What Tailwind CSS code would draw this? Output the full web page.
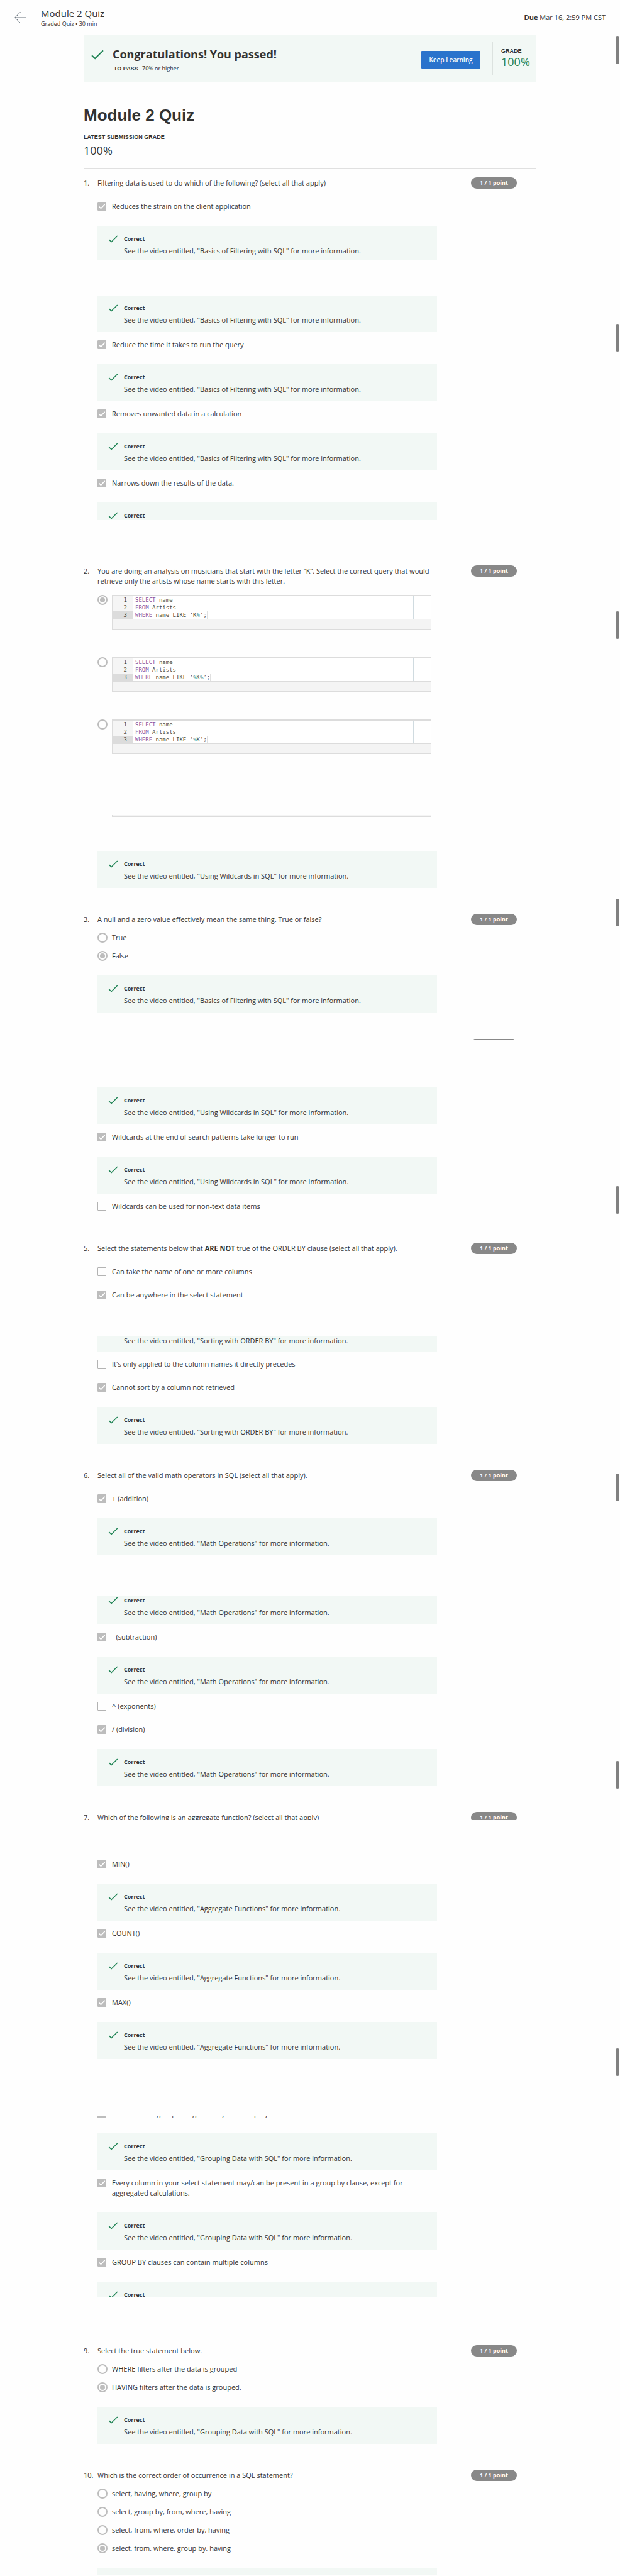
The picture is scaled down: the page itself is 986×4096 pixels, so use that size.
<!DOCTYPE html>
<html lang="en">
<head>
<meta charset="utf-8">
<title>Module 2 Quiz</title>
<meta name="viewport" content="width=device-width, initial-scale=1">
<script src="https://cdn.jsdelivr.net/npm/@tailwindcss/browser@4"></script>
</head>
<body class="relative overflow-x-hidden bg-[#fefefe] font-['Open_Sans',sans-serif] text-[11px] leading-4 text-[#333]">

<svg class="hidden" aria-hidden="true">
  <symbol id="tick" viewBox="0 0 20 16"><path d="M1 9.2 6.2 14 19 1.4" fill="none" stroke="currentColor" stroke-width="2"/></symbol>
</svg>

<header class="flex h-14 items-center border-b border-[#bdbdbd] px-[23px]">
  <a href="#" aria-label="Back" class="mr-6 block text-[#3c4a57]">
    <svg class="size-[18px]" viewBox="0 0 18 18" fill="none" stroke="currentColor"><path d="M9.3.3.8 9l8.5 8.7" stroke-width="1"/><path d="M.8 9H18" stroke="#7d868e" stroke-width="1.2"/></svg>
  </a>
  <div class="flex-1">
    <p class="text-[15px] leading-5">Module 2 Quiz</p>
    <p class="mt-px text-[9px] leading-3">Graded Quiz • 30 min</p>
  </div>
  <p><b class="font-bold">Due</b> Mar 16, 2:59 PM CST</p>
</header>

<main class="mx-auto max-w-[720px]">
  <section class="flex h-[74px] items-start bg-[#f2f8f5] pl-3">
    <svg class="mt-[23px] h-4 w-5 text-[#1f8354]"><use href="#tick"/></svg>
    <div class="ml-[14px] flex-1 pt-[17px]">
      <h2 class="text-[18px] leading-[26px] font-bold">Congratulations! You passed!</h2>
      <p class="mt-[3px] pl-[2px] text-[9px] leading-[14px]"><b class="mr-1 font-['Liberation_Sans',sans-serif]">TO PASS</b> 70% or higher</p>
    </div>
    <button type="button" class="mt-[25px] mr-[19px] h-7 w-[94px] rounded-[1px] bg-[#2a73cc] text-[10px] font-semibold text-white">Keep Learning</button>
    <div class="mt-[11px] h-[52px] w-[70px] border-l border-[#dce2df] pt-2 pl-[13px]">
      <p class="font-['Liberation_Sans',sans-serif] text-[9px] leading-3 font-bold">GRADE</p>
      <p class="mt-px text-[18px] leading-5 text-[#1f8354]">100%</p>
    </div>
  </section>

  <h1 class="mt-[37px] font-['Liberation_Sans',sans-serif] text-[26px] leading-8 font-bold">Module 2 Quiz</h1>
  <p class="mt-3 font-['Liberation_Sans',sans-serif] text-[9px] leading-[14px] font-bold">LATEST SUBMISSION GRADE</p>
  <p class="mt-[2px] text-[18px] leading-6">100%</p>
  <hr class="mt-4 border-t border-[#e0e0e0]">

  <div id="quiz"></div>
</main>

<!-- scroll thumbs along the right edge -->
<div class="absolute inset-y-0 right-px flex w-[6px] flex-col overflow-hidden pt-[58px]" aria-hidden="true">
  <i class="h-11 shrink-0 rounded-full bg-[#808080]"></i>
  <i class="mt-[413px] h-11 shrink-0 rounded-full bg-[#808080]"></i>
  <i class="mt-[413px] h-11 shrink-0 rounded-full bg-[#808080]"></i>
  <i class="mt-[413px] h-11 shrink-0 rounded-full bg-[#808080]"></i>
  <i class="mt-[413px] h-11 shrink-0 rounded-full bg-[#808080]"></i>
  <i class="mt-[413px] h-11 shrink-0 rounded-full bg-[#808080]"></i>
  <i class="mt-[413px] h-11 shrink-0 rounded-full bg-[#808080]"></i>
  <i class="mt-[413px] h-11 shrink-0 rounded-full bg-[#808080]"></i>
  <i class="mt-[793px] h-[2px] shrink-0 rounded-t-full bg-[#808080]"></i>
</div>

<script>
  let id = 0;
  let group = 0;

  const pill = '<span class="ml-[54px] block h-[18px] w-[73px] shrink-0 rounded-[9px] bg-[#888] text-center text-[9px] leading-[18px] font-bold text-white">1 / 1 point</span>';

  // question line: number, text, points
  const ask = (gap, n, text, clip = '') => {
    group = n;
    return `<div class="${gap} ${clip} flex items-start"><span class="w-[22px] shrink-0 pt-px">${n}.</span><h3 class="w-[540px] pt-px">${text}</h3>${pill}</div>`;
  };

  const field = (type, on) => type === 'radio'
    ? `<input id="o${id}" name="q${group}" type="radio" disabled ${on ? 'checked' : ''} class="mr-[7px] block size-4 shrink-0 appearance-none rounded-full border-2 border-[#bdbdbd] bg-clip-content p-[2px] checked:bg-[#bdbdbd]">`
    : `<span class="relative mt-[2px] mr-[9px] block size-[14px] shrink-0"><input id="o${id}" type="checkbox" disabled ${on ? 'checked' : ''} class="peer block size-[14px] appearance-none rounded-[1px] border border-[#b3b3b3] checked:border-[#bdbdbd] checked:bg-[#bdbdbd]"><svg class="absolute inset-[2px] hidden size-[10px] text-white peer-checked:block" viewBox="0 0 10 10" fill="none" stroke="currentColor" stroke-width="1.6"><path d="M.4 5.2 3.5 8.3 9.8 1.8"/></svg></span>`;

  const option = (gap, type, on, text, clip = '') => {
    id++;
    return `<div class="${gap} ${clip} ml-[22px] flex max-w-[540px] items-start">${type === 'radio' ? '<span class="pt-px">' + field(type, on) + '</span>' : field(type, on)}<label for="o${id}" class="flex-1 pt-px pb-px">${text}</label></div>`;
  };
  const box = (gap, on, text) => option(gap, 'checkbox', on, text);
  const radio = (gap, on, text) => option(gap, 'radio', on, text);

  // feedback panel; size holds the height and padding of panels that are cut off
  const note = (gap, topic, size = 'h-[59px] pt-[15px]', title = true) =>
    `<div class="${gap} ${size} ml-[22px] max-w-[540px] overflow-hidden bg-[#f2f8f5] pl-[17px]">` +
    (title ? '<p class="flex items-center gap-[9px] text-[9px] leading-3 font-bold"><svg class="h-3 w-4 text-[#1f8354]"><use href="#tick"/></svg>Correct</p>' : '') +
    (topic ? `<p class="${title ? 'mt-[5px]' : ''} pl-[25px]">See the video entitled, "${topic}" for more information.</p>` : '') + '</div>';

  const pct = '<span class="text-[#3e999f]">%</span>';
  const code = (gap, on, like) => {
    id++;
    const row = (n, kw, rest, last) => `<div class="flex"><span class="w-8 shrink-0 pr-[9px] text-right ${last ? 'bg-[#dcdcdc]' : 'bg-[#f5f5f5]'}">${n}</span><code class="ml-1 font-['DejaVu_Sans_Mono',monospace] ${last ? 'border-r border-[#e0e0e0]' : ''}"><span class="text-[#8959a8]">${kw}</span> ${rest}</code></div>`;
    return `<div class="${gap} ml-[22px] flex max-w-[540px] items-start pr-[9px]">${field('radio', on)}<label for="o${id}" class="block flex-1 border border-[#dcdcdc] font-['DejaVu_Sans_Mono',monospace] text-[9px] leading-3 text-[#4d4d4c]">
      <span class="relative block border-y border-[#dcdcdc] bg-white">${row(1, 'SELECT', 'name')}${row(2, 'FROM', 'Artists')}${row(3, 'WHERE', 'name LIKE ‘' + like + '’;', true)}<span class="absolute inset-y-0 right-[27px] w-px bg-[#d0dbe0]"></span></span>
      <span class="block h-[15px] bg-[#f4f4f4]"></span></label></div>`;
  };

  const F = 'Basics of Filtering with SQL', W = 'Using Wildcards in SQL', O = 'Sorting with ORDER BY',
        M = 'Math Operations', A = 'Aggregate Functions', G = 'Grouping Data with SQL';

  document.getElementById('quiz').innerHTML = [
    ask('mt-[14px]', 1, 'Filtering data is used to do which of the following? (select all that apply)'),
    box('mt-[19px]', 1, 'Reduces the strain on the client application'),
    note('mt-[22px]', F, 'h-[54px] pt-[15px]'),
    note('mt-[57px]', F, 'h-[58px] pt-[14px]'),
    box('mt-[11px]', 1, 'Reduce the time it takes to run the query'),
    note('mt-[22px]', F),
    box('mt-[11px]', 1, 'Removes unwanted data in a calculation'),
    note('mt-[22px]', F),
    box('mt-[11px]', 1, 'Narrows down the results of the data.'),
    note('mt-[22px]', '', 'h-[28px] pt-[15px]'),

    ask('mt-[72px]', 2, 'You are doing an analysis on musicians that start with the letter “K”. Select the correct query that would retrieve only the artists whose name starts with this letter.'),
    code('mt-[14px]', 1, 'K' + pct),
    code('mt-[44px]', 0, pct + 'K' + pct),
    code('mt-[44px]', 0, pct + 'K'),
    '<div class="mt-[97px] mr-[167px] ml-[45px] h-[3px] border border-t-0 border-[#dcdcdc] bg-[#f4f4f4]"></div>',
    note('mt-[54px]', W),

    ask('mt-[41px]', 3, 'A null and a zero value effectively mean the same thing. True or false?'),
    radio('mt-[11px]', 0, 'True'),
    radio('mt-[11px]', 1, 'False'),
    note('mt-[22px]', F),

    '<div class="mt-[42px] ml-[620px] h-[2px] w-[65px] rounded-t-[2px] bg-[#888]"></div>',
    note('mt-[75px]', W),
    box('mt-[11px]', 1, 'Wildcards at the end of search patterns take longer to run'),
    note('mt-[22px]', W),
    box('mt-[11px]', 0, 'Wildcards can be used for non-text data items'),

    ask('mt-[49px]', 5, 'Select the statements below that <b>ARE NOT</b> true of the ORDER BY clause (select all that apply).'),
    box('mt-[19px]', 0, 'Can take the name of one or more columns'),
    box('mt-[19px]', 1, 'Can be anywhere in the select statement'),
    note('mt-[56px]', O, 'h-[25px]', false),
    box('mt-[11px]', 0, "It's only applied to the column names it directly precedes"),
    box('mt-[19px]', 1, 'Cannot sort by a column not retrieved'),
    note('mt-[22px]', O),

    ask('mt-[41px]', 6, 'Select all of the valid math operators in SQL (select all that apply).'),
    box('mt-[19px]', 1, '+ (addition)'),
    note('mt-[22px]', M),
    note('mt-[64px]', M, 'h-[46px] pt-[2px]'),
    box('mt-[11px]', 1, '- (subtraction)'),
    note('mt-[22px]', M),
    box('mt-[11px]', 0, '^ (exponents)'),
    box('mt-[19px]', 1, '/ (division)'),
    note('mt-[22px]', M),

    ask('mt-[41px]', 7, 'Which of the following is an aggregate function? (select all that apply)', 'h-[13px] overflow-hidden'),
    box('mt-[61px]', 1, 'MIN()'),
    note('mt-[22px]', A),
    box('mt-[11px]', 1, 'COUNT()'),
    note('mt-[22px]', A),
    box('mt-[11px]', 1, 'MAX()'),
    note('mt-[22px]', A),

    '<div class="mt-[90px] flex h-[6px] flex-col justify-end overflow-hidden">' + box('', 1, 'NULLs will be grouped together if your Group By column contains NULLs') + '</div>',
    note('mt-[22px]', G),
    box('mt-[11px]', 1, 'Every column in your select statement may/can be present in a group by clause, except for aggregated calculations.'),
    note('mt-[22px]', G),
    box('mt-[11px]', 1, 'GROUP BY clauses can contain multiple columns'),
    note('mt-[22px]', '', 'h-[24px] pt-[15px]'),

    ask('mt-[77px]', 9, 'Select the true statement below.'),
    radio('mt-[11px]', 0, 'WHERE filters after the data is grouped'),
    radio('mt-[11px]', 1, 'HAVING filters after the data is grouped.'),
    note('mt-[22px]', G),

    ask('mt-[41px]', 10, 'Which is the correct order of occurrence in a SQL statement?'),
    radio('mt-[11px]', 0, 'select, having, where, group by'),
    radio('mt-[11px]', 0, 'select, group by, from, where, having'),
    radio('mt-[11px]', 0, 'select, from, where, order by, having'),
    radio('mt-[11px]', 1, 'select, from, where, group by, having'),
    note('mt-[22px]', '', 'h-[12px]', false)
  ].join('');
</script>
</body>
</html>
